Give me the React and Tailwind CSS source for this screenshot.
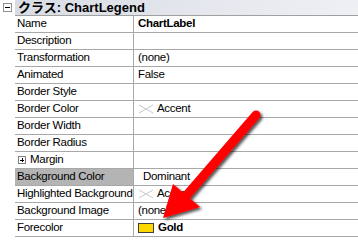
import React from "react";

const rows = [
  { k: "Name", v: "ChartLabel", bold: true },
  { k: "Description", v: "" },
  { k: "Transformation", v: "(none)" },
  { k: "Animated", v: "False" },
  { k: "Border Style", v: "" },
  { k: "Border Color", v: "Accent", x: true },
  { k: "Border Width", v: "" },
  { k: "Border Radius", v: "" },
  { k: "Margin", v: "", plus: true },
  { k: "Background Color", v: "Dominant", sel: true },
  { k: "Highlighted Background", v: "Accent", x: true },
  { k: "Background Image", v: "(none)" },
  { k: "Forecolor", v: "Gold", bold: true, gold: true },
];

function XIcon() {
  return (
    <svg width="16" height="10" viewBox="0 0 16 10" className="mr-[3px] shrink-0">
      <path d="M1 1 L15 9 M15 1 L1 9" stroke="#c8c8c8" strokeWidth="1" fill="none" />
    </svg>
  );
}

export default function App() {
  return (
    <div
      className="relative w-[358px] h-[240px] bg-white overflow-hidden text-[11.5px] tracking-[-0.3px] text-black"
      style={{ fontFamily: '"Liberation Sans", Arial, sans-serif' }}
    >
      <div className="flex h-[16px]">
        <div className="w-[15px] flex items-start pt-[3px] pl-[3px]">
          <div className="w-[9px] h-[9px] border border-[#909090] flex items-center justify-center bg-white">
            <div className="w-[5px] h-px bg-black" />
          </div>
        </div>
        <div className="flex-1 bg-gradient-to-r from-[#d8dce4] to-[#eef0f4] border-b border-[#a0a0a0] flex items-center pl-[3px] font-bold text-[13px] tracking-normal"
          style={{ fontFamily: '"Liberation Sans", "Noto Sans CJK JP", sans-serif' }}>
          クラス: ChartLegend
        </div>
      </div>
      <div className="pl-[15px]">
        {rows.map((r) => (
          <div key={r.k} className="flex h-[17px] border-b border-[#a8a8a8]">
            <div
              className={`w-[119px] shrink-0 border-r border-[#a8a8a8] flex items-center pl-[2px] whitespace-nowrap overflow-hidden ${r.sel ? "bg-[#b4b4b4]" : ""}`}
            >
              {r.plus && (
                <div className="w-[8px] h-[8px] border border-[#808080] flex items-center justify-center mr-[4px] ml-[1px] relative">
                  <div className="absolute w-[4px] h-px bg-black" />
                  <div className="absolute w-px h-[4px] bg-black" />
                </div>
              )}
              {r.k}
            </div>
            <div className={`flex-1 flex items-center whitespace-nowrap ${r.sel ? "pl-[9px]" : "pl-[4px]"} ${r.bold ? "font-bold" : ""}`}>
              {r.x && <XIcon />}
              {r.gold && <div className="w-[16px] h-[10px] bg-[#ffd700] border border-[#404040] mr-[4px] shrink-0" />}
              {r.v}
            </div>
          </div>
        ))}
      </div>
      <svg className="absolute left-0 top-0 pointer-events-none" width="358" height="240">
        <defs>
          <filter id="sh" x="-20%" y="-20%" width="140%" height="140%">
            <feDropShadow dx="2" dy="2" stdDeviation="1.5" floodColor="#000" floodOpacity="0.7" />
          </filter>
        </defs>
        <g filter="url(#sh)">
          <line x1="256" y1="115" x2="186" y2="196" stroke="#ff0000" strokeWidth="9" strokeLinecap="round" />
          <polygon points="163,218 173,184 200,207" fill="#ff0000" />
        </g>
      </svg>
    </div>
  );
}
